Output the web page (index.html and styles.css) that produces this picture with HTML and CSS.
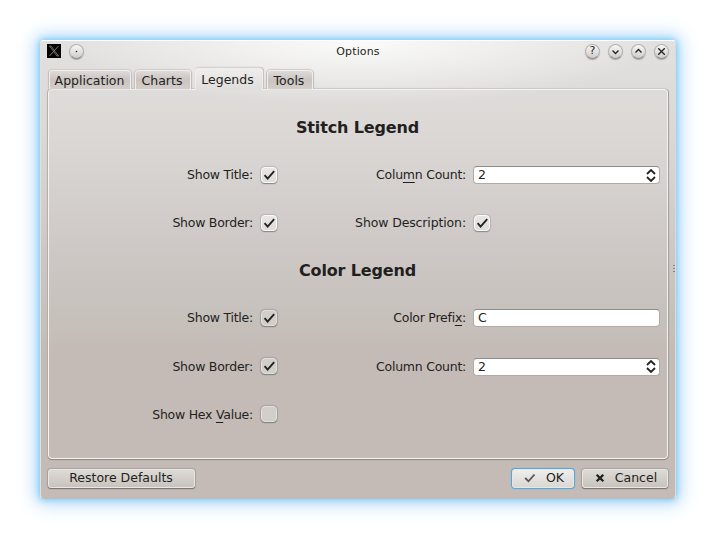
FILE: index.html
```html
<!DOCTYPE html>
<html lang="en">
<head>
<meta charset="utf-8">
<title>Options</title>
<link rel="stylesheet" href="styles.css">
</head>
<body>
<main class="window">
  <header class="titlebar">
    <svg class="app-icon" width="14" height="14" viewBox="0 0 14 14"><rect width="14" height="14" fill="#000"/><path d="M2.5 2h1.5l7.5 10h-1.5z" fill="#555" stroke="#999" stroke-width=".7"/><path d="M11.5 2L2.5 12" stroke="#999" stroke-width=".8"/></svg>
    <span class="round"><svg viewBox="0 0 15 15"><circle cx="7.5" cy="7.5" r=".8" fill="#222"/></svg></span>
    <h1 class="title">Options</h1>
    <span class="round">?</span>
    <span class="round"><svg viewBox="0 0 15 15"><path d="M4.5 6.5l3 3 3-3"/></svg></span>
    <span class="round"><svg viewBox="0 0 15 15"><path d="M4.5 8.5l3-3 3 3"/></svg></span>
    <span class="round"><svg viewBox="0 0 15 15"><path d="M4.2 4.2l6.6 6.6m0-6.6l-6.6 6.6"/></svg></span>
  </header>
  <nav class="tabs">
    <span class="tab application">Application</span>
    <span class="tab charts">Charts</span>
    <span class="tab active">Legends</span>
    <span class="tab tools">Tools</span>
  </nav>
  <section class="panel">
    <h2>Stitch Legend</h2>
    <label>Show Title:</label><span class="check"><svg viewBox="0 0 16 16"><path d="M3.6 8.2l3 3.4 6.6-7.4"/></svg></span>
    <label>Colu<u>m</u>n Count:</label><span class="field">2<svg class="spin" viewBox="0 0 10 13"><path d="M1 5l4-4 4 4M1 8l4 4 4-4"/></svg></span>
    <label>Show Border:</label><span class="check"><svg viewBox="0 0 16 16"><path d="M3.6 8.2l3 3.4 6.6-7.4"/></svg></span>
    <label class="wide">Show Description:</label><span class="check"><svg viewBox="0 0 16 16"><path d="M3.6 8.2l3 3.4 6.6-7.4"/></svg></span>
    <h2>Color Legend</h2>
    <label>Show Title:</label><span class="check low"><svg viewBox="0 0 16 16"><path d="M3.6 8.2l3 3.4 6.6-7.4"/></svg></span>
    <label>Color Prefi<u>x</u>:</label><span class="field">C</span>
    <label>Show Border:</label><span class="check low"><svg viewBox="0 0 16 16"><path d="M3.6 8.2l3 3.4 6.6-7.4"/></svg></span>
    <label>Column Count:</label><span class="field">2<svg class="spin" viewBox="0 0 10 13"><path d="M1 5l4-4 4 4M1 8l4 4 4-4"/></svg></span>
    <label>Show Hex <u>V</u>alue:</label><span class="check low"></span>
  </section>
  <footer class="actions">
    <button class="restore">Restore Defaults</button>
    <button class="ok"><svg width="12" height="10" viewBox="0 0 12 10"><path d="M1.2 5l3.3 3.3L10.5 1.5" stroke="#555" stroke-width="1.8"/></svg>OK</button>
    <button class="cancel"><svg width="10" height="10" viewBox="0 0 10 10"><path d="M1.7 1.7l6.6 6.6m0-6.6L1.7 8.3" stroke="#222" stroke-width="2.3"/></svg>Cancel</button>
  </footer>
  <i class="grip"></i>
</main>
</body>
</html>
```
FILE: styles.css
```css
* { box-sizing: border-box; }
body {
  margin: 0;
  padding: 40px;
  height: 539px;
  overflow: hidden;
  background: #fff;
  color: #231f20;
  font: 12.5px/16px "DejaVu Sans", sans-serif;
}
.window {
  position: relative;
  display: flex;
  flex-direction: column;
  width: 636px;
  height: 459px;
  padding: 0 7px;
  border: 1px solid;
  border-color: #fdfdfd #dedad8 #c4bbb7 #e2dfdd;
  border-radius: 4px;
  background:
    radial-gradient(ellipse 300px 64px at 50% 0, #fbfbfa, rgba(245, 245, 244, 0)),
    linear-gradient(#e2e1df 0, #dedcda 50px, #d9d5d2 115px, #cdc8c5 210px, #c6c0bb 280px, #c4bbb7 308px);
  box-shadow: 0 0 6px #62c6f6, 0 0 14px 3px #b4dcfa, 0 0 22px 8px #e4effd;
}
.titlebar { display: flex; align-items: center; height: 20px; margin-right: -1px; }
.app-icon { margin-left: -1px; margin-right: 8px; }
.round {
  display: flex;
  align-items: center;
  justify-content: center;
  width: 15px;
  height: 15px;
  margin-left: 8px;
  border: 1px solid #b4b2b0;
  border-bottom-color: #8a8886;
  border-radius: 50%;
  background: linear-gradient(#f7f7f6, #cfcdca);
  box-shadow: 0 1px 1px #aaa;
  font-size: 11px;
}
.app-icon + .round { margin-left: 0; }
.round svg { flex: none; width: 15px; height: 15px; }
svg path { fill: none; }
.round path { stroke: #222; stroke-width: 1.3; }
.title { flex: 1; margin: 0; padding: 1px 0 0 47px; text-align: center; font-size: 11px; letter-spacing: .15px; font-weight: 400; }
.title + .round { margin-left: 0; }
.tabs { display: flex; align-items: flex-end; height: 29px; padding-left: 1px; position: relative; z-index: 1; }
.tab {
  height: 19px;
  margin: 0 4px 1px 0;
  border: 1px solid #f0eeed;
  border-bottom: 0;
  border-radius: 4px 4px 0 0;
  background: linear-gradient(#dedad8, #cbc4c1 50%, #d4cecb);
  box-shadow: 0 -1px 1px #cfccc9, 1px 0 1px #bebab7, -1px 0 1px #bebab7;
  line-height: 19px;
  text-align: center;
}
.application { width: 82px; }
.charts { width: 56px; }
.tools { width: 46px; }
.tab.active {
  height: 22px;
  width: 68px;
  margin-bottom: 0;
  padding-right: 3px;
  background: linear-gradient(#eeedec, #e0dedc);
  box-shadow: 0 -1px 1px #d6d3d1, 1px -1px 1px #c0bcba;
  line-height: 22px;
}
.charts, .tools { padding-right: 2px; }
.application { padding-right: 1px; }
.panel {
  display: grid;
  grid-template-columns: 204px 24px 189px 194px;
  grid-template-rows: 48px 48px 48px 47px 48px 49px 47px;
  align-items: center;
  width: 620px;
  height: 370px;
  padding-top: 12px;
  margin-top: -1px;
  border: 1px solid #f5f3f2;
  border-radius: 4px;
  box-shadow: 0 1px 1px #898480, 1px 0 1px #a39e9b, -1px 0 1px #b5b0ad, 0 -1px 1px #d4d1ce;
  padding-top: 13px;
}
.panel h2 {
  grid-column: 1 / -1;
  margin: 1px 0 0;
  padding-left: 6px;
  text-align: center;
  font-size: 16px;
  line-height: 20px;
  font-weight: 700;
  letter-spacing: -.15px;
}
.panel label { text-align: right; white-space: nowrap; letter-spacing: -.25px; }
.panel label.wide { letter-spacing: -.13px; }
u { text-decoration-thickness: 1px; text-underline-offset: 3px; text-decoration-skip-ink: none; }
.check {
  width: 16px;
  height: 16px;
  margin: -1px 0 0 7.5px;
  border: 1px solid #fafafa;
  border-radius: 4px;
  background: linear-gradient(#e8e7e5, #dfddda);
  box-shadow: 0 1px 1px #8d8784, 0 0 1px 1px #bbb6b3;
}
.check.low { background: #d2cec9; border-color: #e3e1de; box-shadow: 0 1px 1px #857e7b, 0 0 1px 1px #aaa4a1; }
.check svg { display: block; width: 16px; height: 16px; margin: -1px; }
.check path { stroke: #222; stroke-width: 1.9; }
.field {
  display: flex;
  align-items: center;
  justify-content: space-between;
  height: 18px;
  margin-left: 7px;
  padding: 0 3px 0 4px;
  border: 1px solid #b0aba8;
  border-top-color: #8e8a87;
  border-radius: 4px;
  background: #fff;
}
.spin { width: 10px; height: 13px; }
.spin path { stroke: #222; stroke-width: 1.8; }
.actions { display: flex; align-items: center; margin-top: 9px; height: 20px; }
button {
  display: flex;
  align-items: center;
  justify-content: center;
  height: 19px;
  padding: 0;
  border: 1px solid #e9e7e5;
  border-radius: 3px;
  background: linear-gradient(#dddad6, #c8c4bd);
  box-shadow: 0 1px 1px #77716e, 0 0 1px 1px #aaa5a1;
  color: #231f20;
  font: inherit;
}
.restore { width: 147px; margin-right: auto; padding-right: 1px; }
.ok { width: 62px; padding-left: 2px; gap: 10px; margin-right: 8px; background: linear-gradient(#efeeed, #dad7d4); box-shadow: 0 0 1px 1px #45a9dc; }
.cancel { width: 86px; padding-left: 2px; gap: 10px; }
.grip {
  position: absolute;
  right: 0;
  top: 224px;
  width: 2px;
  height: 8px;
  background: repeating-linear-gradient(#8a8583 0 1px, transparent 1px 3px);
}
```
